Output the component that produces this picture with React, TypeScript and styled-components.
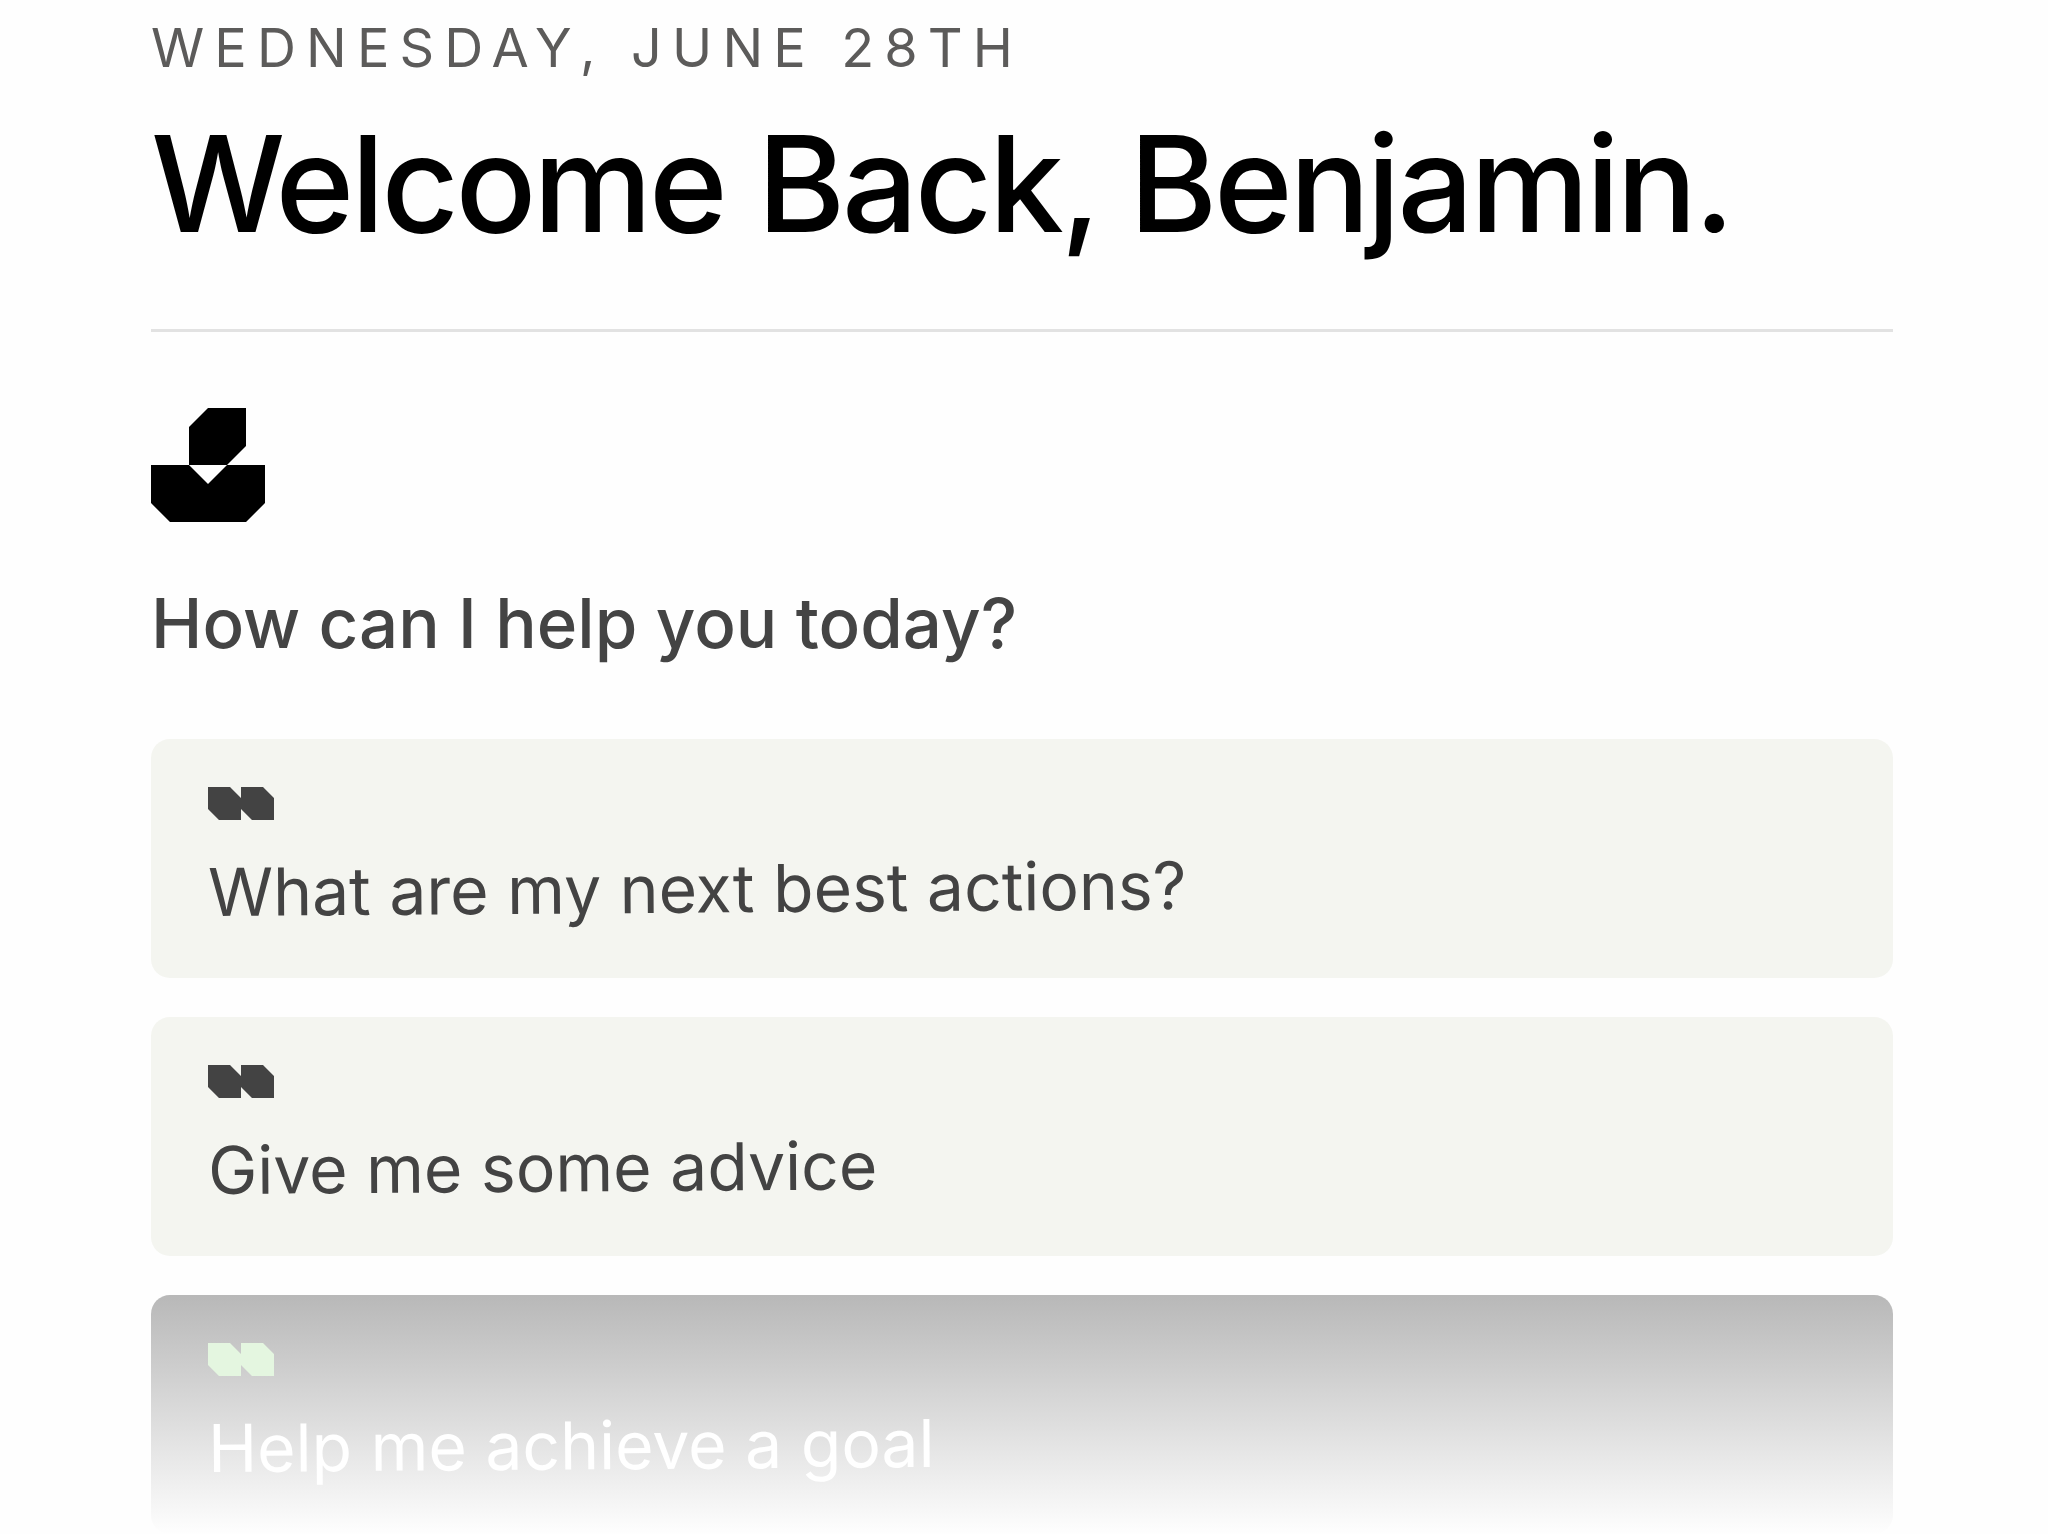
import React from "react";
import styled, { createGlobalStyle, css } from "styled-components";

const GlobalStyle = createGlobalStyle`
  *, *::before, *::after { box-sizing: border-box; }
  body {
    margin: 0;
    background: #fefefe;
    font-family: Inter, "Liberation Sans", sans-serif;
  }
`;

const Page = styled.main`
  display: flex;
  flex-direction: column;
  padding: 15px 155px 0 151px;
`;

const DateLine = styled.p`
  margin: 0;
  color: #5c5b5a;
  font-size: 54px;
  font-weight: 400;
  line-height: 66px;
  letter-spacing: 0.188em;
  text-transform: uppercase;
`;

const Title = styled.h1`
  margin: 22px 0 0;
  color: #000;
  font-size: 134px;
  font-weight: 500;
  line-height: 160px;
  letter-spacing: -0.024em;
`;

const Divider = styled.hr`
  width: 100%;
  height: 3px;
  margin: 66px 0 76px;
  border: 0;
  background: #e2e2e2;
`;

const Logo = styled.svg`
  display: block;
  width: 114px;
  height: 114px;
`;

const Question = styled.h2`
  margin: 59px 0 74px;
  color: #444;
  font-size: 69px;
  font-weight: 500;
  line-height: 84px;
`;

const PromptList = styled.ul`
  display: flex;
  flex-direction: column;
  gap: 39px;
  margin: 0;
  padding: 0;
  list-style: none;
`;

const PromptButton = styled.button<{ $faded?: boolean }>`
  display: flex;
  flex-direction: column;
  align-items: flex-start;
  gap: 32px;
  width: 100%;
  padding: 48px 57px 46px;
  border: 0;
  border-radius: 19px;
  background: #f4f5f0;
  color: #434343;
  font: inherit;
  text-align: left;
  cursor: pointer;

  ${({ $faded }) =>
    $faded &&
    css`
      background: linear-gradient(#b8b8b8, #fefefe);
      color: #fff;
    `}
`;

const QuoteIcon = styled.svg<{ $faded?: boolean }>`
  display: block;
  width: 66px;
  height: 33px;
  fill: ${({ $faded }) => ($faded ? "#e4f6e0" : "#434343")};
`;

const PromptText = styled.span`
  font-size: 66px;
  line-height: 80px;
  transform: rotate(-0.4deg);
  transform-origin: left center;
`;

const prompts = [
  { text: "What are my next best actions?" },
  { text: "Give me some advice" },
  { text: "Help me achieve a goal", faded: true },
];

export default function App() {
  return (
    <>
      <GlobalStyle />
      <Page>
        <DateLine>Wednesday, June 28th</DateLine>
        <Title>Welcome Back, Benjamin.</Title>
        <Divider />
        <Logo viewBox="0 0 6 6" aria-hidden="true">
          <path d="M3 0H5V2L4 3H6V5L5 6H1L0 5V3H2V1ZM2 3L3 4L4 3Z" fillRule="evenodd" />
        </Logo>
        <Question>How can I help you today?</Question>
        <PromptList>
          {prompts.map(({ text, faded }) => (
            <li key={text}>
              <PromptButton type="button" $faded={faded}>
                <QuoteIcon viewBox="0 0 6 3" $faded={faded} aria-hidden="true">
                  <path d="M0 0H2L3 1V0H5L6 1V3H4L3 2V3H1L0 2Z" />
                </QuoteIcon>
                <PromptText>{text}</PromptText>
              </PromptButton>
            </li>
          ))}
        </PromptList>
      </Page>
    </>
  );
}
